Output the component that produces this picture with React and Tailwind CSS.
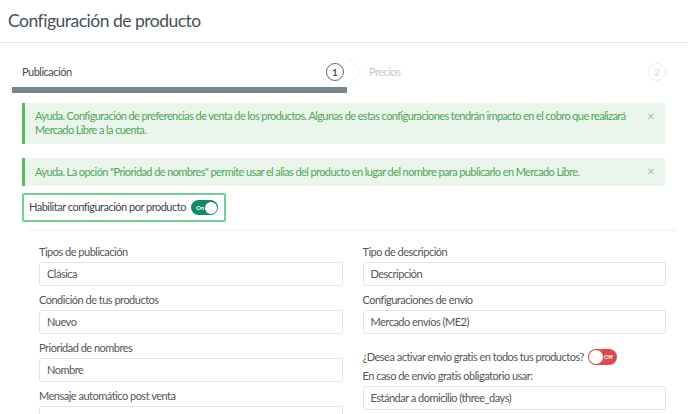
const Field = ({ label, value }) => (
  <div className="flex flex-col">
    <label className="text-[11px] tracking-[-0.5px] leading-[18px] text-[#555]">{label}</label>
    <div className="mt-[1px] h-[24px] border border-[#e3e3e3] rounded-[2px] px-[7px] flex items-center text-[11px] tracking-[-0.5px] text-[#555]">
      {value}
    </div>
  </div>
);

const Alert = ({ children, className }) => (
  <div className={`relative bg-[#eaf6ec] border-l-[3px] border-[#5cb85c] text-[#4fa554] text-[11px] tracking-[-0.6px] leading-[14px] pl-[10px] pr-[22px] ${className}`}>
    {children}
    <span className="absolute right-[11px] top-[6px] text-[#b5b5b5] text-[13px] leading-[14px]">×</span>
  </div>
);

const App = () => {
  return (
    <div className="w-[688px] h-[414px] overflow-hidden bg-white font-['Lato',sans-serif]">
      {/* Header */}
      <div className="h-[43px] border-b border-[#e8e8e8] flex items-center px-[8px]">
        <h1 className="text-[17.5px] tracking-[-0.5px] text-[#46505a] leading-none">Configuración de producto</h1>
      </div>

      {/* Steps */}
      <div className="flex h-[50px] pt-[15px]">
        <div className="w-[335px] ml-[12px] flex flex-col">
          <div className="flex items-center h-[28px] pl-[10px] pr-[3px]">
            <span className="text-[11px] tracking-[-0.5px] text-[#4a4a4a] flex-1">Publicación</span>
            <span className="w-[18px] h-[18px] rounded-full border border-[#666] flex items-center justify-center text-[10px] font-bold text-[#555]">1</span>
          </div>
          <div className="h-[6px] bg-[#78868f] mt-[1px]" />
        </div>
        <svg width="16" height="30" viewBox="0 0 16 30" className="mt-[-1px]">
          <path d="M1 1 L14 15 L1 29" fill="none" stroke="#ececec" strokeWidth="1" />
        </svg>
        <div className="flex items-center h-[28px] flex-1 pl-[6px] pr-[22px]">
          <span className="text-[11px] tracking-[-0.5px] text-[#c6c6c6] flex-1">Precios</span>
          <span className="w-[18px] h-[18px] rounded-full border border-[#eeeeee] flex items-center justify-center text-[10px] font-bold text-[#dddddd]">2</span>
        </div>
      </div>

      {/* Alerts */}
      <div className="pl-[22px] pr-[23px] mt-[10px] flex flex-col">
        <Alert className="pt-[6px] pb-[7px]">
          Ayuda. Configuración de preferencias de venta de los productos. Algunas de estas configuraciones tendrán impacto en el cobro que realizará Mercado Libre a la cuenta.
        </Alert>
        <Alert className="mt-[14px] py-[7px]">
          Ayuda. La opción "Prioridad de nombres" permite usar el alias del producto en lugar del nombre para publicarlo en Mercado Libre.
        </Alert>
        <div className="mt-[7px] w-[204px] h-[29px] border-2 border-[#6ed096] rounded-[2px] flex items-center pl-[5px]">
          <span className="text-[11px] tracking-[-0.5px] text-[#444] whitespace-nowrap">Habilitar configuración por producto</span>
          <div className="ml-[5px] w-[27px] h-[15px] rounded-full bg-[#0d8a6a] flex items-center justify-between pl-[5px] pr-[1px]">
            <span className="text-[6px] font-bold text-white leading-none">On</span>
            <span className="w-[12px] h-[12px] rounded-full bg-white" />
          </div>
        </div>
      </div>

      {/* Divider */}
      <div className="ml-[29px] mr-[12px] mt-[8px] border-t border-[#efefef]" />

      {/* Form */}
      <div className="grid grid-cols-2 gap-x-[20px] pl-[39px] pr-[22px] pt-[12px]">
        <div className="flex flex-col gap-[5px]">
          <Field label="Tipos de publicación" value="Clásica" />
          <Field label="Condición de tus productos" value="Nuevo" />
          <Field label="Prioridad de nombres" value="Nombre" />
          <Field label="Mensaje automático post venta" value="" />
        </div>
        <div className="flex flex-col gap-[5px]">
          <Field label="Tipo de descripción" value="Descripción" />
          <Field label="Configuraciones de envío" value="Mercado envíos (ME2)" />
          <div className="mt-[8px] h-[20px] flex items-center">
            <span className="text-[11px] tracking-[-0.5px] text-[#555]">¿Desea activar envio gratis en todos tus productos?</span>
            <div className="ml-[4px] w-[29px] h-[16px] rounded-full bg-[#dc4a4a] flex items-center justify-between pl-[1px] pr-[4px]">
              <span className="w-[14px] h-[14px] rounded-full bg-white" />
              <span className="text-[6px] font-bold text-white leading-none">Off</span>
            </div>
          </div>
          <div className="mt-[-5px]">
            <Field label="En caso de envío gratis obligatorio usar:" value="Estándar a domicilio (three_days)" />
          </div>
        </div>
      </div>
    </div>
  );
};

export default App;
